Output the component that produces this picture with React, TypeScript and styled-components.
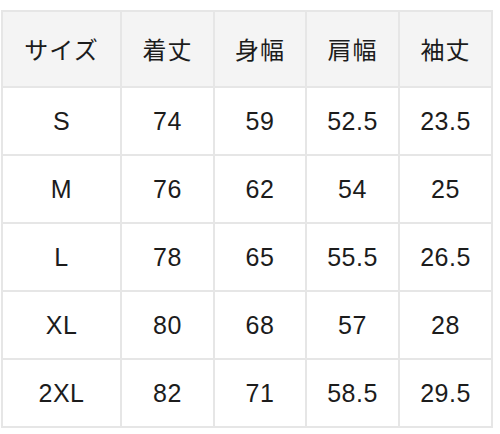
import React from "react";
import styled, { createGlobalStyle } from "styled-components";

const GlobalStyle = createGlobalStyle`
  html, body {
    margin: 0;
    padding: 0;
    background: #ffffff;
  }
  body {
    font-family: "Liberation Sans", Arial, "Noto Sans CJK JP", sans-serif;
    color: #1c1c1c;
  }
`;

const headers = ["サイズ", "着丈", "身幅", "肩幅", "袖丈"];

const rows = [
  ["S", "74", "59", "52.5", "23.5"],
  ["M", "76", "62", "54", "25"],
  ["L", "78", "65", "55.5", "26.5"],
  ["XL", "80", "68", "57", "28"],
  ["2XL", "82", "71", "58.5", "29.5"],
];

const colWidths = [119, 93, 92, 93, 93];

const App = () => {
  return (
    <Root>
      <GlobalStyle />
      <SizeTable>
        <colgroup>
          {colWidths.map((w, i) => (
            <col key={i} style={{ width: w }} />
          ))}
        </colgroup>
        <thead>
          <tr>
            {headers.map((h) => (
              <HeadCell key={h}>{h}</HeadCell>
            ))}
          </tr>
        </thead>
        <tbody>
          {rows.map((row) => (
            <tr key={row[0]}>
              {row.map((v, i) => (
                <Cell key={i}>{v}</Cell>
              ))}
            </tr>
          ))}
        </tbody>
      </SizeTable>
    </Root>
  );
};

export default App;

const Root = styled.div`
  padding: 10px 0 0 1px;
`;

const SizeTable = styled.table`
  border-collapse: separate;
  border-spacing: 0;
  table-layout: fixed;
  width: 492px;
  border-top: 2px solid #e6e6e6;
  border-left: 2px solid #e6e6e6;
`;

const cellBase = `
  box-sizing: border-box;
  padding: 0;
  text-align: center;
  vertical-align: middle;
  border-right: 2px solid #e6e6e6;
  border-bottom: 2px solid #e6e6e6;
  font-weight: 400;
  line-height: 1;
`;

const HeadCell = styled.th`
  ${cellBase};
  height: 76px;
  background: #f4f4f4;
  font-family: "Noto Sans CJK JP", "Liberation Sans", sans-serif;
  font-size: 24px;
  letter-spacing: 1px;
`;

const Cell = styled.td`
  ${cellBase};
  height: 68px;
  background: #ffffff;
  font-size: 25px;
  letter-spacing: 0.5px;
`;
